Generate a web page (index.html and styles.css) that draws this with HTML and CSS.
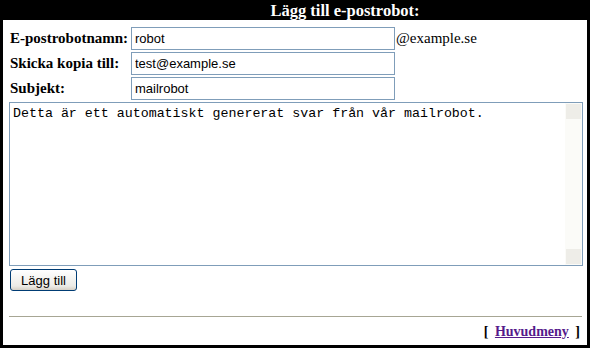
FILE: index.html
```html
<!DOCTYPE html>
<html lang="sv">
<head>
  <meta charset="UTF-8">
  <title>Lägg till e-postrobot</title>
  <link rel="stylesheet" href="styles.css">
</head>
<body>
  <div class="box">
    <div class="title">Lägg till e-postrobot:</div>
    <form class="content" onsubmit="return false">
      <div class="fields">
        <label for="name">E-postrobotnamn:</label>
        <input type="text" id="name" value="robot">
        <span class="domain">@example.se</span>

        <label for="copy">Skicka kopia till:</label>
        <input type="text" id="copy" value="test@example.se">
        <span></span>

        <label for="subject">Subjekt:</label>
        <input type="text" id="subject" value="mailrobot">
        <span></span>
      </div>
      <textarea class="body">Detta är ett automatiskt genererat svar från vår mailrobot.</textarea>
      <button type="submit">Lägg till</button>
    </form>
    <hr>
    <div class="menu">[ <a href="#">Huvudmeny</a> ]</div>
  </div>
</body>
</html>
```

FILE: styles.css
```css
body {
  margin: 0;
  font-family: "Liberation Serif", serif;
  background: #fff;
}
.box {
  width: 590px;
  height: 348px;
  box-sizing: border-box;
  border: 3px solid #000;
  border-top: 0;
  background: #fff;
}
.title {
  background: #000;
  color: #fff;
  font-weight: bold;
  font-size: 16.5px;
  height: 20px;
  line-height: 22px;
  text-align: center;
  padding-left: 100px;
  margin: 0 -3px;
}
.content {
  padding: 7px 5px 0 6px;
}
.fields {
  display: grid;
  grid-template-columns: 122px 264px auto;
  row-gap: 2px;
  align-items: center;
}
.fields label {
  font-weight: bold;
  font-size: 15px;
  padding-left: 1px;
}
.fields input {
  height: 23px;
  box-sizing: border-box;
  border: 1px solid #7f9db9;
  padding: 1px 3px;
  font: 13px "Liberation Sans", Arial, sans-serif;
  color: #000;
}
.domain {
  font-size: 15px;
  padding-left: 1px;
}
.body {
  display: block;
  width: 574px;
  height: 164px;
  box-sizing: border-box;
  margin: 2px 0 0;
  border: 1px solid #7f9db9;
  padding: 3px 20px 3px 3px;
  font: 13.3px "Liberation Mono", monospace;
  resize: none;
  overflow: hidden;
  /* disabled scrollbar look: two arrow buttons over a pale track */
  background:
    linear-gradient(#eeede8, #eeede8) right 1px top 1px / 15px 15px no-repeat,
    linear-gradient(#eeede8, #eeede8) right 1px bottom 1px / 15px 15px no-repeat,
    linear-gradient(to left, #fbfbf8 17px, #fff 17px);
}
button {
  margin: 3px 0 0 1px;
  width: 67px;
  height: 22px;
  border: 1px solid #003c74;
  border-radius: 3px;
  background: linear-gradient(#ffffff, #ecebe6 80%, #d6d0c5);
  font: 13px "Liberation Sans", Arial, sans-serif;
  color: #000;
  padding: 0;
}
hr {
  margin: 25px 5px 0 6px;
  border: 0;
  border-top: 1px solid #a7a694;
  height: 0;
}
.menu {
  text-align: right;
  font-weight: bold;
  font-size: 14px;
  padding: 7px 7px 0 0;
}
.menu a {
  color: #551a8b;
  margin: 0 3px;
}
```
